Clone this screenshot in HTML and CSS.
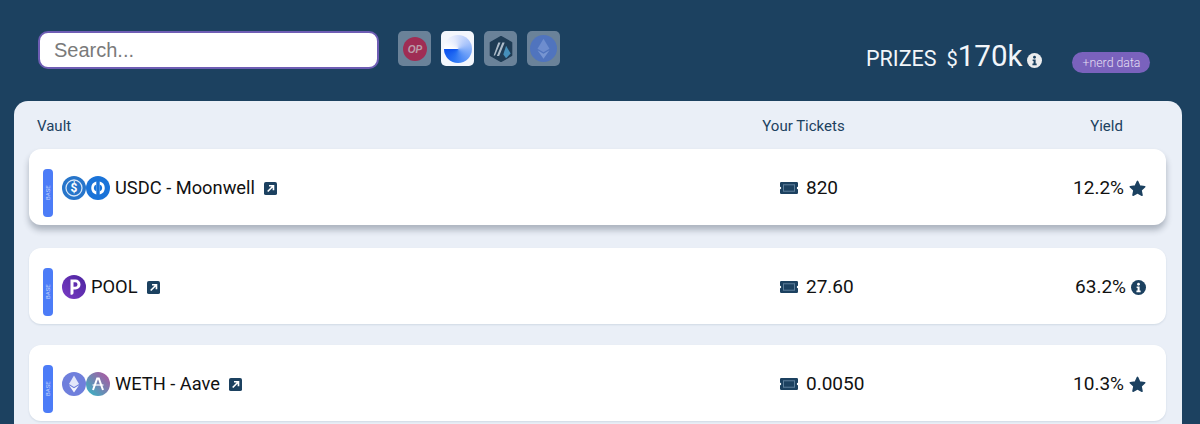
FILE: index.html
```html
<!DOCTYPE html>
<html lang="en">
<head>
<meta charset="utf-8">
<title>Vaults</title>
<link rel="stylesheet" href="styles.css">
</head>
<body>
<svg class="defs" width="0" height="0" aria-hidden="true">
  <defs>
    <symbol id="ext" viewBox="0 0 14 14">
      <rect width="14" height="14" rx="2" fill="#1c4160"/>
      <path d="M4 10.2 9.6 4.6M5.4 4h4.8v4.8" fill="none" stroke="#fff" stroke-width="1.8"/>
    </symbol>
    <symbol id="ticket" viewBox="0 0 20 14">
      <rect x="3" y="3" width="14" height="8" fill="#5b7d99"/>
      <path fill-rule="evenodd" fill="#1c4160" d="M2.200 1h15.600A1.200 1.200 0 0 1 19 2.200V5.800a1.200 1.200 0 0 0 0 2.400v3.600a1.200 1.200 0 0 1-1.200 1.200H2.200A1.200 1.200 0 0 1 1 11.800V8.200a1.200 1.200 0 0 0 0-2.400V2.200A1.200 1.200 0 0 1 2.200 1ZM4 3.300v7.400h12V3.300Z"/>
      <rect x="5" y="4.300" width="10" height="5.400" fill="#1c4160"/>
    </symbol>
    <symbol id="star" viewBox="0 0 16 16">
      <path fill="#1c4160" stroke="#1c4160" stroke-width="1.500" stroke-linejoin="round" d="m8 1.300 2.050 4.400 4.750.6-3.500 3.250.92 4.750L8 11.950 3.780 14.300l.92-4.750L1.200 6.300l4.750-.6Z"/>
    </symbol>
    <symbol id="info" viewBox="0 0 16 16">
      <circle cx="8" cy="8" r="8" fill="currentColor"/>
      <circle cx="8" cy="4.500" r="1.500" class="info-mark"/>
      <path class="info-mark" d="M6 7h3.200v4.300H10.300V13H5.800v-1.700H7V8.600H6Z"/>
    </symbol>
  </defs>
</svg>

<header class="top">
  <input class="search" type="text" placeholder="Search...">
  <div class="chains">
    <button class="chain dim" aria-label="Optimism">
      <svg viewBox="0 0 24 24" width="24" height="24"><circle cx="12" cy="12" r="12" fill="#a91f48"/><text x="12" y="15.500" class="op">OP</text></svg>
    </button>
    <button class="chain active" aria-label="Base">
      <span class="base-mark"></span>
    </button>
    <button class="chain dim" aria-label="Arbitrum">
      <svg viewBox="0 0 26 28" width="24" height="26">
        <path d="M13 .5 24.500 7v14L13 27.500 1.500 21V7Z" fill="#12304a" stroke="#12304a" stroke-width="1.500" stroke-linejoin="round"/>
        <path d="M14.500 7H17L11 21.500H8.500ZM10 7h2.500L6.500 21H5Z" fill="#b9c6d2"/>
        <path d="M18.500 10.500 23.500 19l-5 5-3-4Z" fill="#3f92c0"/>
      </svg>
    </button>
    <button class="chain dim" aria-label="Ethereum">
      <svg viewBox="0 0 28 28" width="27" height="27">
        <circle cx="14" cy="14" r="14" fill="#4c72c5"/>
        <path d="m14 4 6.200 10.300L14 18l-6.200-3.700Z" fill="#6f90d8"/>
        <path d="m14 19.400 6.200-3.700L14 24.500l-6.200-8.800Z" fill="#7a99dc"/>
      </svg>
    </button>
  </div>
  <div class="prizes">
    <span class="prizes-label">PRIZES</span>
    <span class="prizes-dollar">$</span><span class="prizes-value">170k</span>
    <svg class="info-light" width="15" height="15"><use href="#info"/></svg>
  </div>
  <button class="nerd">+nerd data</button>
</header>

<main class="panel">
  <div class="head">
    <span class="col-vault">Vault</span>
    <span class="col-tickets">Your Tickets</span>
    <span class="col-yield">Yield</span>
  </div>

  <section class="row row-lifted">
    <div class="col-vault vault">
      <span class="tag">BASE</span>
      <span class="tokens">
        <svg viewBox="0 0 24 24" width="24" height="24"><circle cx="12" cy="12" r="12" fill="#2775ca"/><circle cx="12" cy="12" r="8" fill="none" stroke="#d5e5f7" stroke-width="1.300"/><text x="12" y="16.200" class="usd">$</text></svg>
        <svg viewBox="0 0 24 24" width="24" height="24"><circle cx="12" cy="12" r="12" fill="#1a73d8"/><path d="M10.300 5.500a6.700 6.700 0 0 0 0 13ZM13.700 5.500a6.700 6.700 0 0 1 0 13Z" fill="#fff"/><path d="M10.300 8.500a3.700 3.700 0 0 0 0 7ZM13.700 8.500a3.700 3.700 0 0 1 0 7Z" fill="#1a73d8"/></svg>
      </span>
      <span class="name">USDC - Moonwell</span>
      <svg class="ext" width="13" height="13"><use href="#ext"/></svg>
    </div>
    <div class="col-tickets tickets"><svg width="20" height="14"><use href="#ticket"/></svg><span>820</span></div>
    <div class="col-yield yield"><span>12.2%</span><svg width="17" height="17"><use href="#star"/></svg></div>
  </section>

  <section class="row">
    <div class="col-vault vault">
      <span class="tag">BASE</span>
      <span class="tokens">
        <svg viewBox="0 0 24 24" width="24" height="24"><defs><linearGradient id="pool" x1="0" y1="1" x2="1" y2="0"><stop offset="0" stop-color="#7a3bc4"/><stop offset="1" stop-color="#4c249f"/></linearGradient></defs><circle cx="12" cy="12" r="12" fill="url(#pool)"/><path fill-rule="evenodd" fill="#fff" d="M8.500 4.500h5a5 5 0 0 1 0 10h-2v3.500a2 2 0 0 1-3 1.500ZM11.500 7.300v4.400h1.800a2.200 2.200 0 0 0 0-4.400Z"/></svg>
      </span>
      <span class="name">POOL</span>
      <svg class="ext" width="13" height="13"><use href="#ext"/></svg>
    </div>
    <div class="col-tickets tickets"><svg width="20" height="14"><use href="#ticket"/></svg><span>27.60</span></div>
    <div class="col-yield yield"><span>63.2%</span><svg class="info-dark" width="15" height="15"><use href="#info"/></svg></div>
  </section>

  <section class="row">
    <div class="col-vault vault">
      <span class="tag">BASE</span>
      <span class="tokens">
        <svg viewBox="0 0 24 24" width="24" height="24"><circle cx="12" cy="12" r="12" fill="#6f7fdc"/><path d="m12 3.500 5 8.500-5 3-5-3Z" fill="#e3e7fa"/><path d="m12 16.200 5-3-5 7.300-5-7.300Z" fill="#f3f5fd"/></svg>
        <svg viewBox="0 0 24 24" width="24" height="24"><defs><linearGradient id="aave" x1="0" y1="1" x2="1" y2="0"><stop offset="0" stop-color="#2ebac6"/><stop offset="1" stop-color="#b6509e"/></linearGradient></defs><circle cx="12" cy="12" r="12" fill="url(#aave)"/><path d="M7 18 11.200 6.500h1.600L17 18" fill="none" stroke="#fff" stroke-width="2"/><path d="M6.500 13h11" fill="none" stroke="#fff" stroke-width="1.200"/></svg>
      </span>
      <span class="name">WETH - Aave</span>
      <svg class="ext" width="13" height="13"><use href="#ext"/></svg>
    </div>
    <div class="col-tickets tickets"><svg width="20" height="14"><use href="#ticket"/></svg><span>0.0050</span></div>
    <div class="col-yield yield"><span>10.3%</span><svg width="17" height="17"><use href="#star"/></svg></div>
  </section>
</main>
</body>
</html>
```

FILE: styles.css
```css
* { box-sizing: border-box; }

html, body {
  height: 100%;
  overflow: hidden;
}

body {
  margin: 0;
  background: #1c4160;
  font-family: Roboto, "Liberation Sans", sans-serif;
  color: #111;
}

.defs { display: block; height: 0; }

.top {
  display: flex;
  align-items: flex-start;
  height: 101px;
  padding: 31px 0 0 38px;
}

.search {
  width: 341px;
  height: 38px;
  border: 2px solid #6e5db4;
  border-radius: 10px;
  background: #fff;
  padding: 0 14px;
  font-family: "Liberation Sans", Arial, sans-serif;
  font-size: 20px;
  outline: none;
}
.search::placeholder { color: #7a7a7a; opacity: 1; }

.chains {
  display: flex;
  gap: 10px;
  margin-left: 19px;
}

.chain {
  width: 33px;
  height: 35px;
  border: 0;
  border-radius: 5px;
  padding: 0;
  display: flex;
  align-items: center;
  justify-content: center;
}
.chain.dim { background: #6a8299; }
.chain.dim svg { opacity: .85; }
.chain.active { background: #f3f6fc; }

.base-mark {
  display: block;
  width: 28px;
  height: 28px;
  border-radius: 50%;
  background: conic-gradient(from 270deg, #fff 0deg, #e2e9fc 70deg, #a9c4fb 150deg, #7fabf9 190deg, #2a74f3 290deg, #0b50ee 360deg);
}

.op {
  font: italic 700 10px "Liberation Sans", sans-serif;
  fill: #c9a3ae;
  text-anchor: middle;
}

.prizes {
  display: flex;
  align-items: baseline;
  margin-left: 306px;
  margin-top: 8px;
  color: #f2f6fa;
  height: 36px;
}
.prizes-label { font-size: 21.500px; margin-right: 10px; }
.prizes-dollar { font-size: 20px; }
.prizes-value { font-size: 29.500px; }
.info-light {
  --mark: #1c4160;
  color: #ecedee;
  margin-left: 5px;
  align-self: center;
  position: relative;
  top: 3px;
}
.info-mark { fill: var(--mark, #fff); }

.nerd {
  margin-left: 30px;
  margin-top: 21px;
  width: 78px;
  height: 21px;
  border: 0;
  border-radius: 11px;
  background: #7a62bd;
  color: #e4dff3;
  font-family: Roboto, sans-serif;
  font-size: 12.300px;
  font-weight: 300;
  padding: 0;
}

.panel {
  margin: 0 18px 0 14px;
  padding: 0 16px 0 15px;
  height: 323px;
  overflow: hidden;
  background: #eaeff7;
  border-radius: 14px 14px 0 0;
}

.head {
  display: flex;
  align-items: center;
  height: 48px;
  color: #1c4160;
  font-size: 15px;
  padding-left: 8px;
  padding-top: 2px;
}

.head .col-vault { flex: 1; }
.head .col-tickets { width: 83px; text-align: center; margin-right: 245px; white-space: nowrap; }
.head .col-yield { width: 33px; margin-right: 43px; text-align: center; }

.row {
  display: flex;
  align-items: flex-start;
  height: 76px;
  margin-bottom: 21px;
  background: #fff;
  border-radius: 12px;
  padding: 20px 14px 0 14px;
  box-shadow: 0 1px 2px rgba(28, 65, 96, .12);
}
.row-lifted {
  margin-bottom: 23px;
  box-shadow: 0 5px 6px rgba(28, 40, 60, .3);
}

.vault {
  display: flex;
  align-items: flex-start;
  width: 736px;
}

.tag {
  flex: none;
  width: 10px;
  height: 48px;
  border-radius: 4px;
  background: #4c7cf7;
  color: #c9d8fb;
  font-size: 6px;
  line-height: 10px;
  text-align: center;
  writing-mode: vertical-rl;
  transform: rotate(180deg);
}

.tokens {
  display: flex;
  margin-left: 9px;
  margin-top: 7px;
}
.tokens svg { display: block; }

.usd {
  font: 700 12px Roboto, sans-serif;
  fill: #fff;
  text-anchor: middle;
}

.name {
  font-size: 18.300px;
  line-height: 24px;
  margin-left: 5px;
  margin-top: 7px;
  white-space: nowrap;
}

.ext { margin-left: 9px; margin-top: 13px; flex: none; }

.tickets {
  display: flex;
  align-items: center;
  gap: 7px;
  font-size: 19px;
  line-height: 24px;
  width: 275px;
  margin-top: 7px;
}

.yield {
  flex: 1;
  display: flex;
  justify-content: flex-end;
  align-items: center;
  gap: 5px;
  font-size: 19px;
  line-height: 24px;
  margin-top: 7px;
  margin-right: 6px;
}
.info-dark { color: #1c4160; }
```
